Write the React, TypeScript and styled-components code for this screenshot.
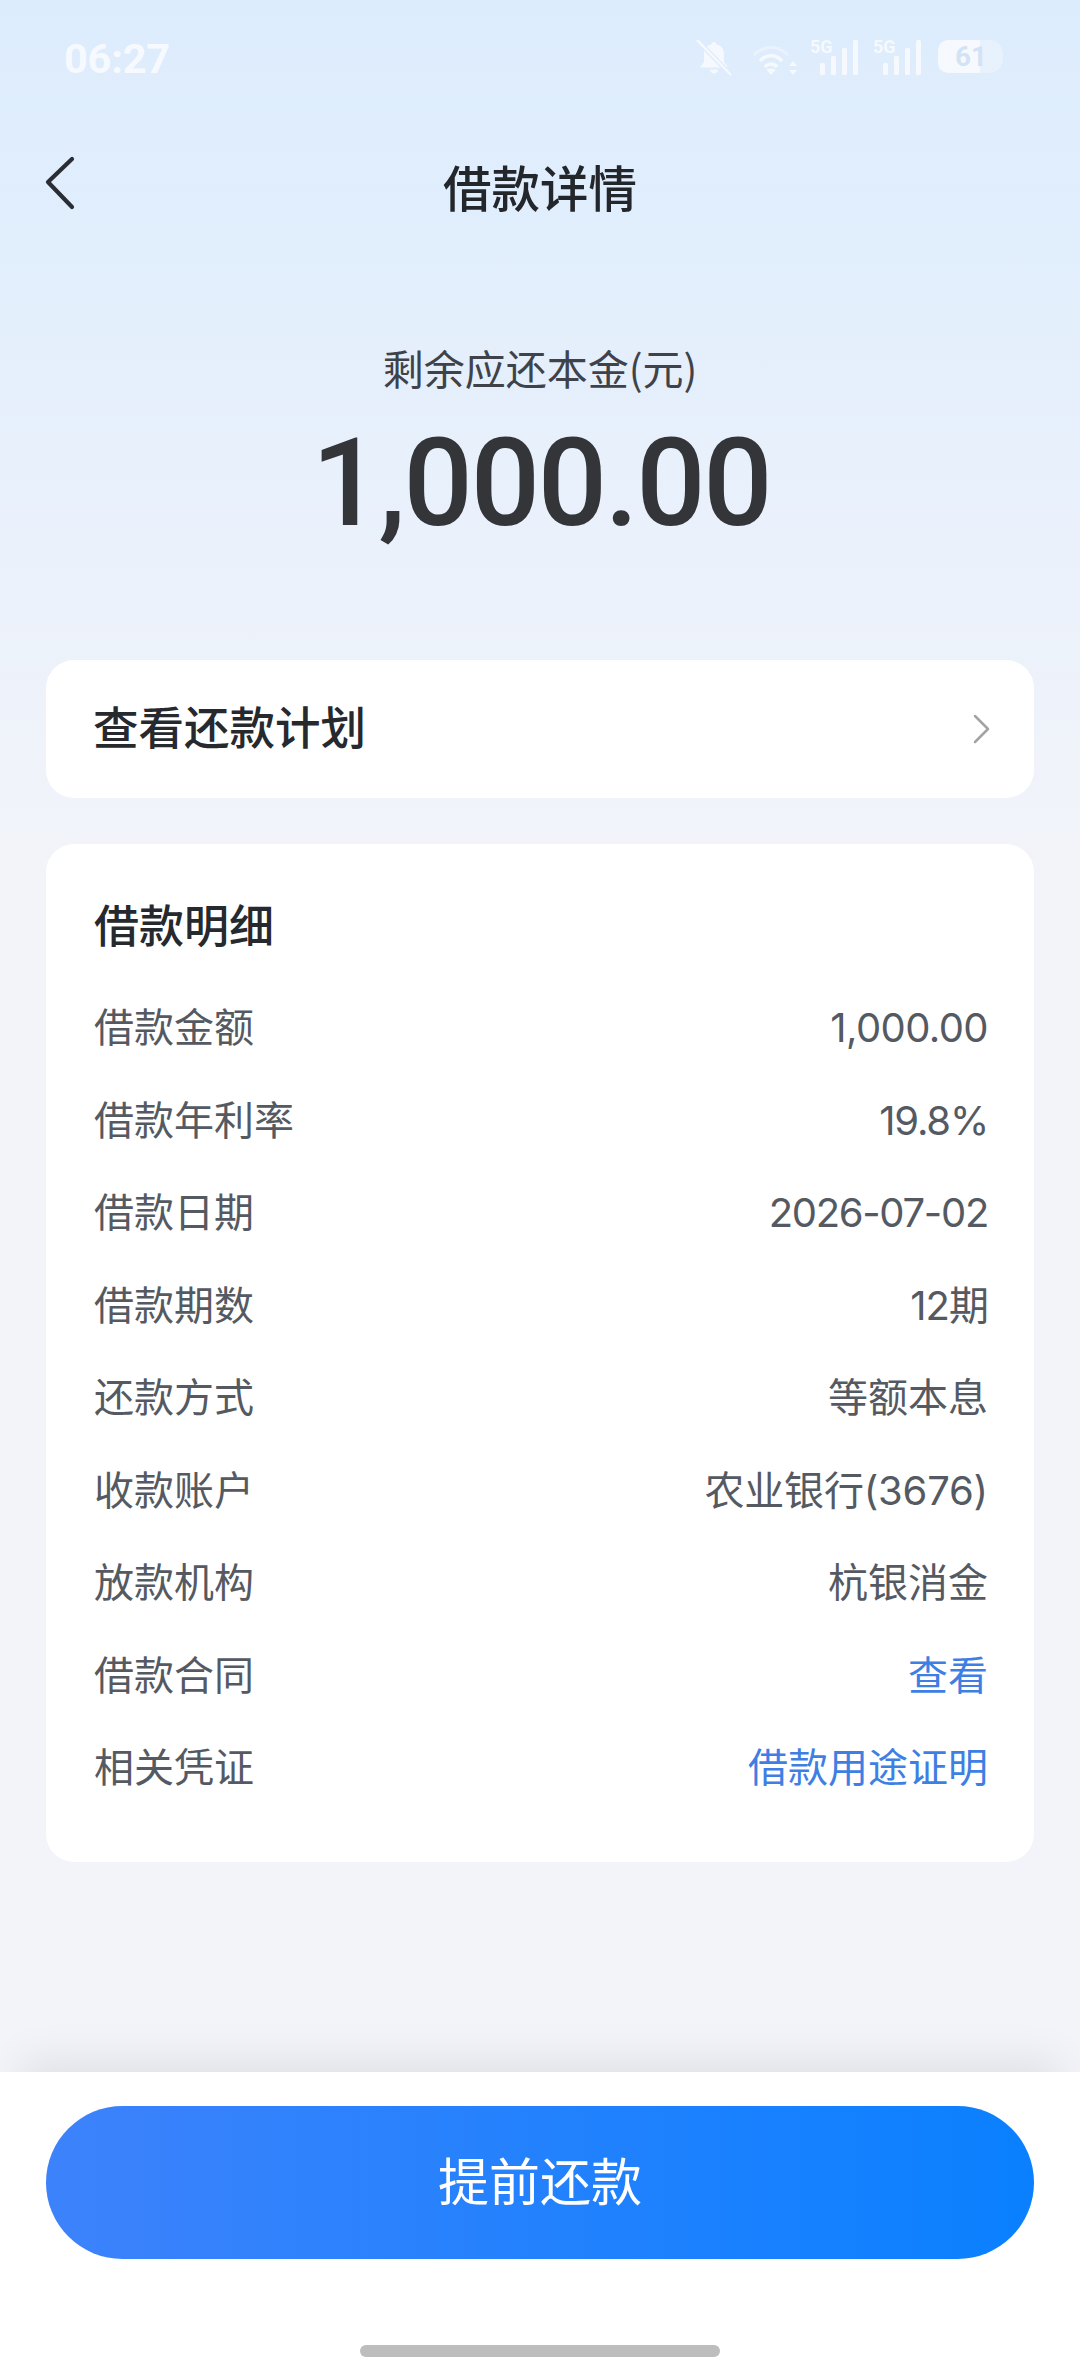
import React from "react";
import styled, { createGlobalStyle } from "styled-components";

const cjk = '"Noto Sans CJK SC", "Noto Sans", sans-serif';

const Global = createGlobalStyle`
  html, body { margin: 0; padding: 0; }
  body { width: 1080px; height: 2376px; overflow: hidden; background: #f2f4f9; font-family: ${cjk}; }
  * { box-sizing: border-box; }
`;

const Page = styled.div`
  width: 1080px;
  height: 2376px;
  display: flex;
  flex-direction: column;
  background: linear-gradient(180deg, #ddecfd 0px, #e1eefc 240px, #eaf1fb 540px, #f2f4f9 880px, #f2f4f9 100%);
`;

const StatusBar = styled.div`
  height: 122px;
  padding: 40px 77px 0 64px;
  display: flex;
  align-items: flex-start;
  justify-content: space-between;
  color: rgba(255, 255, 255, 0.75);
`;

const Time = styled.div`
  font: 700 41.5px/38px Roboto, sans-serif;
  letter-spacing: -0.2px;
`;

const StatusIcons = styled.div`
  display: flex;
  align-items: flex-start;
  height: 36px;
  opacity: 0.72;
`;

const Nav = styled.div`
  height: 130px;
  padding-bottom: 3px;
  display: flex;
  align-items: center;
  justify-content: center;
  position: relative;
`;

const BackIcon = styled.svg`
  position: absolute;
  left: 44px;
  top: 34px;
  width: 32px;
  height: 56px;
`;

const NavTitle = styled.h1`
  margin: 0;
  font: 500 48.5px/64px ${cjk};
  color: #23262b;
`;

const Summary = styled.div`
  height: 408px;
  padding-top: 88px;
  display: flex;
  flex-direction: column;
  align-items: center;
`;

const SummaryLabel = styled.div`
  font: 400 41px/54px ${cjk};
  color: #3f4349;
`;

const Amount = styled.div`
  margin-top: 25px;
  margin-left: 2px;
  font: 500 122px/130px Roboto, sans-serif;
  color: #333538;
  letter-spacing: -2.3px;
`;

const Card = styled.div`
  margin: 0 46px;
  background: #fff;
  border-radius: 28px;
`;

const PlanCard = styled(Card)`
  height: 138px;
  padding: 0 42px 0 47px;
  display: flex;
  align-items: center;
  justify-content: space-between;
`;

const PlanText = styled.div`
  margin-bottom: 9px;
  font: 500 45.5px/60px ${cjk};
  color: #26292e;
`;

const DetailCard = styled(Card)`
  margin-top: 46px;
  height: 1018px;
  padding: 47px 46px 48px 48px;
`;

const DetailTitle = styled.h2`
  margin: 0 0 25px;
  font: 500 45px/66px ${cjk};
  color: #26292e;
`;

const Row = styled.div`
  height: 92.5px;
  display: flex;
  align-items: center;
  justify-content: space-between;
  font: 400 40px/56px Inter, ${cjk};
  color: #555a62;
`;

const Value = styled.span<{ $link?: boolean; $spacing?: number }>`
  color: ${(p) => (p.$link ? "#3f7fe4" : "#555a62")};
  letter-spacing: ${(p) => p.$spacing ?? 0}px;
`;

const Spacer = styled.div`
  flex: 1;
`;

const Footer = styled.div`
  height: 304px;
  padding: 34px 46px 19px;
  background: #fff;
  box-shadow: 0 -32px 40px -20px rgba(0, 0, 0, 0.08);
  display: flex;
  flex-direction: column;
  align-items: center;
  position: relative;
`;

const PrimaryButton = styled.button`
  width: 988px;
  height: 153px;
  border: 0;
  border-radius: 76.5px;
  background: linear-gradient(90deg, #3d82fb 0%, #0a80ff 100%);
  color: #fff;
  font: 400 51px/70px ${cjk};
  padding: 0 0 8px;
`;

const HomeBar = styled.div`
  margin-top: auto;
  width: 360px;
  height: 12px;
  border-radius: 6px;
  background: #bdbdbd;
`;

const BellOff = () => (
  <svg width="36" height="36" viewBox="0 0 36 36" fill="#fff" style={{ marginRight: 20 }}>
    <path d="M18 2c1.500 0 2.500 1 2.700 2.400 4.800 1.200 7.300 5 7.300 9.600v8l4 5.500H4l4-5.500v-8c0-4.600 2.500-8.400 7.300-9.600C15.500 3 16.500 2 18 2z" />
    <path d="M14 29.500h8c0 2.500-2 4-4 4s-4-1.500-4-4z" />
    <path d="M1 0 L35 35" stroke="#dfecfe" strokeWidth="5" />
    <path d="M1 0 L35 35" stroke="#fff" strokeWidth="2.500" />
  </svg>
);

const Wifi = () => (
  <svg width="46" height="32" viewBox="0 0 46 32" fill="none" stroke="#fff" style={{ marginRight: 12, marginTop: 4 }}>
    <path d="M2 11 C12 1 26 1 36 11" strokeWidth="3" opacity=".5" />
    <path d="M8 17 C14 10 24 10 30 17" strokeWidth="3.500" />
    <path d="M13 23 C16 19 22 19 25 23" strokeWidth="3.500" />
    <path d="M19 31 l-4.500 -5 c2.500 -2 6.500 -2 9 0 z" fill="#fff" stroke="none" />
    <path d="M41 17 l-4 5 h8 z M41 31 l-4 -5 h8 z" fill="#fff" stroke="none" />
  </svg>
);

const SignalBox = styled.div`
  position: relative;
  width: 50px;
  height: 36px;
  margin-right: 13px;
`;

const SignalLabel = styled.span`
  position: absolute;
  left: 0;
  top: 0;
  font: 700 18px/14px Roboto, sans-serif;
  color: #fff;
`;

const Signal = () => (
  <SignalBox>
    <SignalLabel>5G</SignalLabel>
    <svg width="50" height="36" viewBox="0 0 50 36" fill="#fff">
      <rect x="10" y="23" width="5" height="12" rx="1.500" />
      <rect x="21" y="16" width="5" height="19" rx="1.500" />
      <rect x="32" y="8" width="5" height="27" rx="1.500" />
      <rect x="43" y="0" width="5" height="35" rx="1.500" />
    </svg>
  </SignalBox>
);

const Battery = styled.div`
  position: relative;
  width: 65px;
  height: 33px;
  margin-left: 2px;
  border-radius: 10px 14px 14px 10px;
  background: rgba(255, 255, 255, 0.4);
  overflow: hidden;
`;

const BatteryFill = styled.div`
  height: 100%;
  background: #fff;
  border-radius: 9px 0 0 9px;
`;

const BatteryText = styled.span`
  position: absolute;
  left: 17px;
  top: 0;
  font: 700 28px/33px Roboto, sans-serif;
  color: #cfdff3;
`;

const rows: { label: string; value: string; link?: boolean; spacing?: number }[] = [
  { label: "借款金额", value: "1,000.00", spacing: -0.6 },
  { label: "借款年利率", value: "19.8%", spacing: -1.2 },
  { label: "借款日期", value: "2026-07-02", spacing: -1.3 },
  { label: "借款期数", value: "12期", spacing: -1 },
  { label: "还款方式", value: "等额本息" },
  { label: "收款账户", value: "农业银行(3676)", spacing: -0.2 },
  { label: "放款机构", value: "杭银消金" },
  { label: "借款合同", value: "查看", link: true },
  { label: "相关凭证", value: "借款用途证明", link: true },
];

export default function App() {
  return (
    <Page>
      <Global />
      <StatusBar>
        <Time>06:27</Time>
        <StatusIcons>
          <BellOff />
          <Wifi />
          <Signal />
          <Signal />
          <Battery>
            <BatteryFill style={{ width: "64%" }} />
            <BatteryText>61</BatteryText>
          </Battery>
        </StatusIcons>
      </StatusBar>
      <Nav>
        <BackIcon viewBox="0 0 32 56" fill="none" stroke="#2a2d33" strokeWidth="4.200" strokeLinecap="round" strokeLinejoin="round">
          <path d="M28 3 L4 26 L28 51" />
        </BackIcon>
        <NavTitle>借款详情</NavTitle>
      </Nav>
      <Summary>
        <SummaryLabel>剩余应还本金(元)</SummaryLabel>
        <Amount>1,000.00</Amount>
      </Summary>
      <PlanCard>
        <PlanText>查看还款计划</PlanText>
        <svg width="20" height="30" viewBox="0 0 20 30" fill="none" stroke="#a3a3a3" strokeWidth="2.500" strokeLinecap="round" strokeLinejoin="round">
          <path d="M3 2 L16 15 L3 28" />
        </svg>
      </PlanCard>
      <DetailCard>
        <DetailTitle>借款明细</DetailTitle>
        {rows.map((r) => (
          <Row key={r.label}>
            <span>{r.label}</span>
            <Value $link={r.link} $spacing={r.spacing}>{r.value}</Value>
          </Row>
        ))}
      </DetailCard>
      <Spacer />
      <Footer>
        <PrimaryButton>提前还款</PrimaryButton>
        <HomeBar />
      </Footer>
    </Page>
  );
}
